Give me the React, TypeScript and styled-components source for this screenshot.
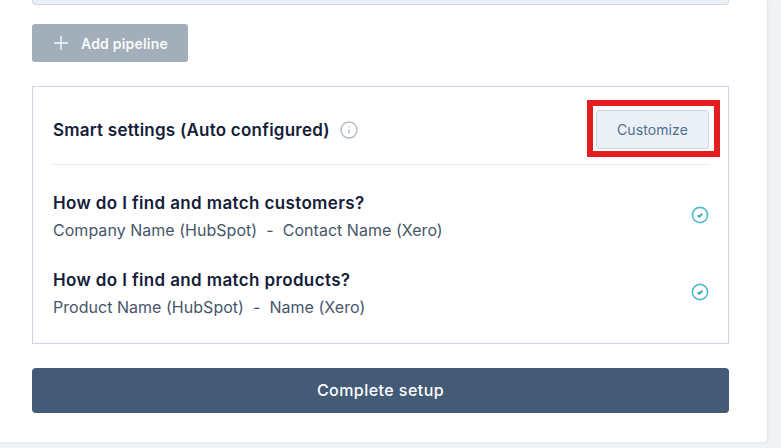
import React from 'react';
import styled, { createGlobalStyle } from 'styled-components';
import { Plus } from 'lucide-react';

const GlobalStyle = createGlobalStyle`
  html, body {
    margin: 0;
    padding: 0;
    height: 448px;
    overflow: hidden;
    background: #eff3f5;
    font-family: Inter, "Liberation Sans", sans-serif;
  }
  * { box-sizing: border-box; }
`;

const Card = styled.main`
  width: 767px;
  height: 442px;
  padding: 0 38px 0 32px;
  background: #ffffff;
  border-radius: 0 0 3px 0;
  box-shadow: 1px 1px 2px rgba(60, 80, 100, 0.08);
`;

const PreviousPanel = styled.div`
  height: 5px;
  background: #eaf0f6;
  border: 1px solid #cbd6e2;
  border-top: 0;
  border-radius: 0 0 4px 4px;
`;

const AddButton = styled.button`
  display: flex;
  align-items: center;
  gap: 9px;
  width: 156px;
  height: 38px;
  margin-top: 19px;
  padding: 0 0 0 18px;
  border: 0;
  border-radius: 3px;
  background: #a2aeb9;
  color: #f8fafb;
  font: 600 14px Inter, "Liberation Sans", sans-serif;
  letter-spacing: 0.2px;
`;

const SettingsBox = styled.section`
  height: 258px;
  margin-top: 24px;
  padding: 0 19px 0 20px;
  border: 1px solid #cbd6e2;
`;

const SettingsHeader = styled.header`
  display: flex;
  align-items: center;
  justify-content: space-between;
  height: 78px;
  padding-top: 8px;
  border-bottom: 1px solid #e4e9ee;
`;

const HeaderTitle = styled.div`
  display: flex;
  align-items: center;
  gap: 10px;
`;

const Heading = styled.h3<{ $spacing: number }>`
  margin: 0;
  font-size: 17px;
  line-height: 22px;
  font-weight: 600;
  letter-spacing: ${({ $spacing }) => $spacing}px;
  color: #141d3a;
`;

const CustomizeSlot = styled.div`
  position: relative;
  display: flex;
`;

const Highlight = styled.div`
  position: absolute;
  top: -10px;
  right: -11px;
  bottom: -8px;
  left: -9px;
  border: 6px solid #e21e1f;
  pointer-events: none;
`;

const CustomizeButton = styled.button`
  width: 113px;
  height: 39px;
  padding: 0;
  border: 1px solid #cbd6e2;
  border-radius: 3px;
  background: #eaf0f6;
  color: #506e91;
  font: 400 14px Inter, "Liberation Sans", sans-serif;
  letter-spacing: 0.1px;
`;

const MatchList = styled.div`
  display: flex;
  flex-direction: column;
  gap: 29px;
  padding-top: 27px;
`;

const MatchRow = styled.div`
  display: flex;
  align-items: center;
  justify-content: space-between;
`;

const MatchText = styled.div`
  display: flex;
  flex-direction: column;
  gap: 6px;
`;

const MatchFields = styled.p`
  margin: 0;
  font-size: 16px;
  line-height: 20px;
  color: #465669;
  letter-spacing: 0.03px;
  white-space: pre;
`;

const CheckMark = styled.svg`
  margin-bottom: 2px;
`;

const CompleteButton = styled.button`
  display: block;
  width: 100%;
  height: 45px;
  margin-top: 24px;
  padding: 0 0 2px;
  border: 0;
  border-radius: 4px;
  background: #435b76;
  color: #ffffff;
  font: 500 16px Inter, "Liberation Sans", sans-serif;
  letter-spacing: 0.45px;
`;

const InfoIcon = () => (
  <svg width="18" height="18" viewBox="0 0 18 18" fill="none" stroke="#b1bcc8" strokeWidth="1.4">
    <circle cx="9" cy="9" r="8" />
    <path d="M9 8.2v4.4" />
    <path d="M9 5.2v1.2" />
  </svg>
);

const CheckIcon = () => (
  <CheckMark width="18" height="18" viewBox="0 0 18 18" fill="none" stroke="#56bccd" strokeWidth="1.6">
    <circle cx="9" cy="9" r="7.6" />
    <path d="M6.6 9.2l1.8 1.5 3-3" strokeWidth="1.8" stroke="#3f9fb2" />
  </CheckMark>
);

const matches = [
  { question: 'How do I find and match customers?', fields: 'Company Name (HubSpot)  -  Contact Name (Xero)' },
  { question: 'How do I find and match products?', fields: 'Product Name (HubSpot)  -  Name (Xero)' },
];

export default function App() {
  return (
    <>
      <GlobalStyle />
      <Card>
        <PreviousPanel />
        <AddButton>
          <Plus size={22} strokeWidth={1.5} />
          Add pipeline
        </AddButton>
        <SettingsBox>
          <SettingsHeader>
            <HeaderTitle>
              <Heading $spacing={0.23}>Smart settings (Auto configured)</Heading>
              <InfoIcon />
            </HeaderTitle>
            <CustomizeSlot>
              <CustomizeButton>Customize</CustomizeButton>
              <Highlight />
            </CustomizeSlot>
          </SettingsHeader>
          <MatchList>
            {matches.map((m) => (
              <MatchRow key={m.question}>
                <MatchText>
                  <Heading $spacing={0.37}>{m.question}</Heading>
                  <MatchFields>{m.fields}</MatchFields>
                </MatchText>
                <CheckIcon />
              </MatchRow>
            ))}
          </MatchList>
        </SettingsBox>
        <CompleteButton>Complete setup</CompleteButton>
      </Card>
    </>
  );
}
